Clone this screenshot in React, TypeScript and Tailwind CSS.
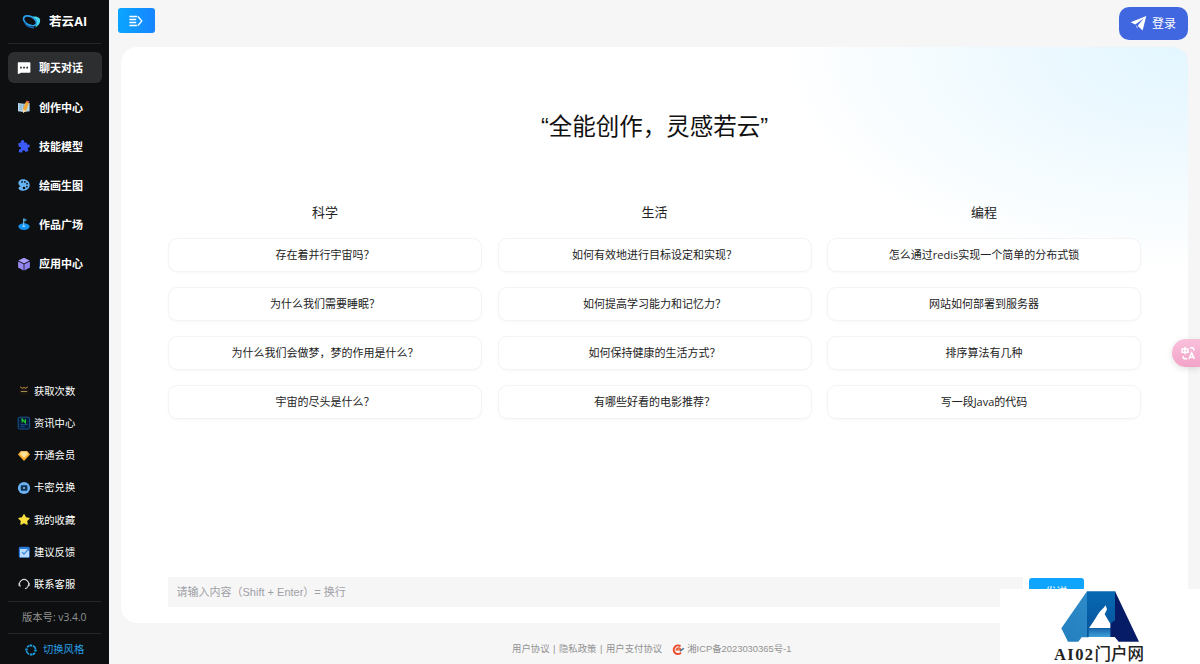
import type { ReactNode } from "react";
import { FaStar } from "react-icons/fa";
import { IoColorPalette } from "react-icons/io5";

interface MenuItem {
    label: string;
    icon: ReactNode;
}

interface TopicProps {
    title: string;
    questions: string[];
}

const navItems: MenuItem[] = [
    {
        label: "聊天对话",
        icon: (
            <svg viewBox="0 0 14 14" className="h-[14px] w-[14px]">
                <path d="M1.4 1.2h11.2q.8 0 .8.8v9q0 .8-.8.8H4L1.6 13q-.8.2-.8-.7V2q0-.8.6-.8z" fill="#fff" />
                <path d="M3.1 5.8h1.7v1.6H3.1zM6.2 5.8h1.7v1.6H6.2zM9.3 5.8H11v1.6H9.3z" fill="#2c2e30" />
            </svg>
        ),
    },
    {
        label: "创作中心",
        icon: (
            <svg viewBox="0 0 14 14" className="h-[14px] w-[14px]">
                <path d="M1 3l5.8.8L12.6 3v8.2l-5.8.9L1 11.2z" fill="#b9d7ea" />
                <path d="M2.2 5l3.3.4M2.2 7l3.3.4M2.2 9l3 .4" stroke="#6a9fc0" strokeWidth=".8" />
                <path d="M6.8 3.8v8.3" stroke="#7190a3" strokeWidth=".7" />
                <path d="M9 1.6l3 1.1-3 8-2.9 2.3-.2-3.4z" fill="#f5a833" />
                <path d="M9 1.6l.5-1.2 3 1.1-.5 1.2z" fill="#e86464" />
                <path d="M5.9 9.6L9 10.7 6.1 13z" fill="#f7dfbd" />
            </svg>
        ),
    },
    {
        label: "技能模型",
        icon: (
            <svg viewBox="0 0 14 14" className="h-[14px] w-[14px]">
                <path
                    d="M3.8 3.6C3.7 1.9 4.5 1 5.7 1.1c1.3.1 1.8 1 1.5 2.3l2.6.3.4 2c1.4-.5 2.6 0 2.6 1.3s-1.1 1.9-2.3 1.7l1 3.4-3.2 1c-.3-1.3-1-1.9-2-1.7-.9.2-1.2 1-.9 2.1l-3.7-.2.5-3.1c1.3 0 1.9-.5 1.8-1.3-.1-.9-.9-1.2-2-.9L1 4.5z"
                    fill="#3c5af5"
                />
            </svg>
        ),
    },
    { label: "绘画生图", icon: <IoColorPalette className="h-[14px] w-[14px] -scale-x-100 text-[#66b3f5]" /> },
    {
        label: "作品广场",
        icon: (
            <svg viewBox="0 0 14 14" className="h-[14px] w-[14px]">
                <ellipse cx="7" cy="9.6" rx="5.6" ry="3.4" fill="#1593f2" />
                <path d="M6.2 1.6h1v8.2h-1z" fill="#7acbf8" />
                <path d="M7 1.2l3.3 1.9L7 5.1z" fill="#3f8fb8" />
                <ellipse cx="6.8" cy="9.2" rx="1.7" ry=".8" fill="#9bdcfb" />
            </svg>
        ),
    },
    {
        label: "应用中心",
        icon: (
            <svg viewBox="0 0 14 14" className="h-[14px] w-[14px]">
                <path d="M7 .7l5.7 2.9L7 6.5 1.3 3.6z" fill="#a99cfb" />
                <path d="M1.1 4.4l5.5 2.8v6.2l-5.5-2.9z" fill="#978af4" />
                <path d="M12.9 4.4L7.4 7.2v6.2l5.5-2.9z" fill="#8f82f0" />
            </svg>
        ),
    },
];

const toolItems: MenuItem[] = [
    {
        label: "获取次数",
        icon: (
            <svg viewBox="0 0 14 14" className="h-[14px] w-[14px]" fill="none">
                <circle cx="7" cy="7" r="5.6" fill="#15130f" />
                <path d="M3.2 2.8l1.9 1.5L7 3.6l1.9.7 1.9-1.5" stroke="#c08c4c" strokeWidth="1" />
                <path d="M3.8 7.5h6.4" stroke="#a8845a" strokeWidth="1.1" />
            </svg>
        ),
    },
    {
        label: "资讯中心",
        icon: (
            <svg viewBox="0 0 14 14" className="h-[14px] w-[14px]" fill="none">
                <rect x="1.2" y="1.2" width="11.4" height="11.8" rx="1.6" fill="#051d3a" stroke="#195395" strokeWidth="1" />
                <path d="M5.2 6.6V3.2l3.2 3.4V3.2" stroke="#1fc32c" strokeWidth="1.3" />
                <path d="M3.6 8.6h7M3.6 10.6h4" stroke="#1d5494" strokeWidth=".9" />
            </svg>
        ),
    },
    {
        label: "开通会员",
        icon: (
            <svg viewBox="0 0 14 14" className="h-[14px] w-[14px]">
                <path d="M3.5 2.2h7L13 5.6 7 12 1 5.6z" fill="#f6ac2f" />
                <path d="M4.2 2.2h5.6l1.2 3.2L7 9 3 5.4z" fill="#ffdb87" />
                <path d="M5 4.5h4L7 6.6z" fill="#fff2d2" />
            </svg>
        ),
    },
    {
        label: "卡密兑换",
        icon: (
            <svg viewBox="0 0 14 14" className="h-[14px] w-[14px]">
                <circle cx="7" cy="7" r="6.1" fill="#69b1f2" />
                <rect x="3.8" y="4.3" width="6.6" height="5.4" rx=".8" fill="#14324f" />
                <circle cx="7" cy="7" r="1" fill="#80bff4" />
            </svg>
        ),
    },
    { label: "我的收藏", icon: <FaStar className="h-[11px] w-[12px] text-[#fbe03e]" /> },
    {
        label: "建议反馈",
        icon: (
            <svg viewBox="0 0 14 14" className="h-[14px] w-[14px]" fill="none">
                <rect x="1.8" y="1.8" width="11" height="11" rx="1.6" fill="#2979d6" />
                <path d="M3 4h7l2 2v6.2H3z" fill="#b9dcff" />
                <path d="M5 7.2l2 2 4.8-5.5" stroke="#3884dc" strokeWidth="1.2" />
            </svg>
        ),
    },
    {
        label: "联系客服",
        icon: (
            <svg viewBox="0 0 14 14" className="h-[14px] w-[14px]" fill="none">
                <path d="M3.4 9.6A4.5 4.5 0 1 1 10.8 9.6Q10 11.4 8 11.6" stroke="#d9d9d9" strokeWidth="1.1" />
                <path d="M2.2 6v3M12 6v3" stroke="#d9d9d9" strokeWidth="1.3" />
            </svg>
        ),
    },
];

const topics: TopicProps[] = [
    {
        title: "科学",
        questions: ["存在着并行宇宙吗？", "为什么我们需要睡眠？", "为什么我们会做梦，梦的作用是什么？", "宇宙的尽头是什么？"],
    },
    {
        title: "生活",
        questions: ["如何有效地进行目标设定和实现？", "如何提高学习能力和记忆力？", "如何保持健康的生活方式？", "有哪些好看的电影推荐？"],
    },
    {
        title: "编程",
        questions: ["怎么通过redis实现一个简单的分布式锁", "网站如何部署到服务器", "排序算法有几种", "写一段Java的代码"],
    },
];

function Sidebar() {
    return (
        <aside className="flex w-[109px] shrink-0 flex-col bg-[#0d0f10] px-2 text-white">
            <div className="flex h-[44px] items-center border-b border-[#242627] pl-[14px]">
                <svg viewBox="0 0 20 16" className="h-[16px] w-[20px]" fill="none">
                    <ellipse cx="8" cy="6.8" rx="7" ry="4.2" transform="rotate(28 8 6.8)" stroke="#2aa3ee" strokeWidth="1.7" />
                    <path d="M10.4 2.8c5.6-.9 8.6 1.7 7.6 5.2-.6 2.3-2.5 4.6-5 5.5 1.9-2.6 3-5.6 1-8-.9-1.200-2.200-2-3.600-2.700z" fill="#49d9ee" />
                    <path d="M2.500 8c1.200 3.400 5 5.600 9.500 5.800" stroke="#1769b6" strokeWidth="1.300" />
                </svg>
                <span className="ml-[7px] pt-[2px] text-[12.5px] font-bold tracking-[0.1px]">若云AI</span>
            </div>
            <nav className="mt-2 flex flex-col gap-2">
                {navItems.map((item, index) => (
                    <div
                        key={item.label}
                        className={
                            index === 0
                                ? "flex h-[31.2px] w-[94px] items-center rounded-[6px] bg-[#2c2e30] pl-[9px]"
                                : "flex h-[31.2px] w-[94px] items-center rounded-[6px] pl-[9px]"
                        }
                    >
                        <span className="flex w-[14px] justify-center">{item.icon}</span>
                        <span className="ml-[8px] pt-[2px] text-[11px] font-bold">{item.label}</span>
                    </div>
                ))}
            </nav>
            <div className="mt-auto flex flex-col">
                {toolItems.map((item) => (
                    <div key={item.label} className="flex h-[32.1px] items-center pl-[9px]">
                        <span className="flex w-[14px] justify-center">{item.icon}</span>
                        <span className="ml-[3px] pt-[1px] text-[10.3px]">{item.label}</span>
                    </div>
                ))}
            </div>
            <div className="mt-[1px] flex h-[32px] items-center border-t border-[#242627] pl-[14px] text-[10.3px] text-[#929292]">
                版本号: v3.4.0
            </div>
            <div className="flex h-[31px] items-center border-t border-[#242627] pt-[1px] pl-[16px] text-[10.3px] text-[#2a9fe5]">
                <svg viewBox="0 0 14 14" className="mr-[5px] h-[14px] w-[14px]" fill="none" stroke="#1ca2e4" strokeWidth="1.6">
                    <path d="M3.2 4.4q.7-1.2 2-1.700M9 2.800q2.200 1 2.500 3.200M11 9.700q-.8 1.200-2.200 1.700M5 11.200Q2.800 10.200 2.500 8" />
                    <path d="M5.600 1.500h2.600v1.900H5.600zM10.300 6.600h2.400v1.900h-2.400zM5.900 10.600h2.600v1.900H5.900zM1.300 5.500h2.400v1.900H1.300z" fill="#1ca2e4" stroke="none" />
                </svg>
                切换风格
            </div>
        </aside>
    );
}

function Topic({ title, questions }: TopicProps) {
    return (
        <div className="flex flex-col">
            <h3 className="text-center text-[13px] leading-[20px] text-[#222]">{title}</h3>
            <div className="mt-[16px] flex flex-col gap-[15px]">
                {questions.map((question) => (
                    <button
                        key={question}
                        className="h-[34px] rounded-[9px] border border-[#f4f4f5] bg-white text-[11px] text-[#222] shadow-[0_1px_3px_rgba(0,0,0,0.03)]"
                    >
                        {question}
                    </button>
                ))}
            </div>
        </div>
    );
}

function Watermark() {
    return (
        <div className="absolute right-0 bottom-0 flex h-[75px] w-[200px] flex-col bg-white">
            <svg viewBox="180 93 240 156" className="mt-[2px] ml-[60px] h-[52px] w-[80px] shrink-0">
                <defs>
                    <linearGradient id="mark-left" x1="0.7" y1="0" x2="0.2" y2="1">
                        <stop offset="0" stopColor="#2d8ac7" />
                        <stop offset="1" stopColor="#2480bf" />
                    </linearGradient>
                    <linearGradient id="mark-mid" x1="0" y1="0" x2="0" y2="1">
                        <stop offset="0" stopColor="#0869b3" />
                        <stop offset="1" stopColor="#03529a" />
                    </linearGradient>
                    <linearGradient id="mark-base" x1="0" y1="0" x2="0" y2="1">
                        <stop offset="0" stopColor="#1766aa" />
                        <stop offset="1" stopColor="#3da1da" />
                    </linearGradient>
                </defs>
                <path d="M261 94L184 205l20 40h31l10-13h20z" fill="url(#mark-left)" />
                <path d="M261 94h85v137h-85z" fill="url(#mark-mid)" />
                <path d="M345 94l72 151h-61l-12-14h-13v-40l14-10z" fill="#061c66" />
                <path d="M266 205h65v26h-65z" fill="url(#mark-base)" />
                <path d="M267 204c17-22 27-47 44-61l6-7 4 12-7 15 17 28v13z" fill="#fff" />
            </svg>
            <div className="ml-[54px] shrink-0 font-['Liberation_Serif','Noto_Sans_CJK_SC',serif] text-[16.5px] leading-[24px] whitespace-nowrap text-[#222]">
                <span className="font-bold tracking-[1.4px]">AI02</span>
                <span className="font-medium">门户网</span>
            </div>
        </div>
    );
}

export default function App() {
    return (
        <div
            lang="zh-CN"
            className="relative flex h-[664px] w-[1200px] overflow-hidden bg-[#f6f6f6] font-['Open_Sans','Noto_Sans_CJK_SC',sans-serif]"
        >
            <Sidebar />
            <div className="flex flex-1 flex-col pr-3 pl-[12px]">
                <header className="flex h-[47px] items-start justify-between">
                    <button className="mt-2 -ml-[3.5px] flex h-[25px] w-[37px] items-center justify-center rounded-[3px] bg-linear-to-r from-[#0ba5ff] to-[#1685ff]">
                        <svg viewBox="0 0 14 12" className="h-[12px] w-[14px]" fill="none" stroke="#fff" strokeWidth="1.3">
                            <path d="M.4 1.500h7.800M.4 4.500h6.800M.4 7.500h6.800M.4 10.500h7.800M9 1.500l3.800 4.500L9 10.500" />
                        </svg>
                    </button>
                    <button className="mt-[7px] flex h-[33px] w-[69px] items-center rounded-[10px] bg-[#4167e0] pl-[11px] text-[12px] text-white">
                        <svg viewBox="0 0 17 17" className="mr-[5px] h-[17px] w-[17px]" fill="#fff">
                            <path d="M16.300 1L.6 7.300l4.700 2.300 8.300-6-5.500 6.600-.2.800 4.700 4.600z" />
                            <path d="M5.800 10.300l1.500 1.200.2 2.500z" />
                        </svg>
                        登录
                    </button>
                </header>
                <main className="flex h-[576px] flex-col rounded-[16px] bg-white bg-[radial-gradient(ellipse_410px_225px_at_100%_0%,#e3f6ff_0%,#edf9ff_40%,#ffffff_100%)] px-[47px]">
                    <h1 className="mt-[60px] text-center font-['Liberation_Sans','Noto_Sans_CJK_SC',sans-serif] text-[23.5px] leading-[40px] text-[#111]">
                        “全能创作，灵感若云”
                    </h1>
                    <div className="mt-[55px] grid grid-cols-3 gap-[15.5px]">
                        {topics.map((topic) => (
                            <Topic key={topic.title} {...topic} />
                        ))}
                    </div>
                    <div className="mt-auto mb-4 flex gap-[6px]">
                        <input
                            className="h-[30px] w-[855px] bg-[#f6f6f6] px-[8.5px] font-['Liberation_Sans','Noto_Sans_CJK_SC',sans-serif] text-[11px] outline-none placeholder:text-[#a0a0a6]"
                            placeholder="请输入内容（Shift + Enter）= 换行"
                        />
                        <button className="mt-[1px] h-[29px] w-[55px] rounded-[3px] bg-[#10a5fc] text-[11px] text-white">发送</button>
                    </div>
                </main>
                <footer className="flex flex-1 items-center pt-3 pl-[391px] font-['Liberation_Sans','Noto_Sans_CJK_SC',sans-serif] text-[9.4px] whitespace-nowrap text-[#929292]">
                    <span>用户协议</span>
                    <span className="mx-[3.5px]">|</span>
                    <span>隐私政策</span>
                    <span className="mx-[3.5px]">|</span>
                    <span>用户支付协议</span>
                    <svg viewBox="0 0 14 12" className="mr-[2px] ml-[9px] h-[12px] w-[14px]" fill="none">
                        <path d="M9.500 2.400A4.200 4.200 0 1 0 10 8.600" stroke="#ed4b2b" strokeWidth="2" />
                        <path d="M4.400 5.800h5.500c-.2-2.200-3.800-2.400-4.500-.6" stroke="#e85a30" strokeWidth="1.300" />
                        <path d="M9 7.200l3.800-3" stroke="#3d6c93" strokeWidth="1.400" />
                    </svg>
                    <span>湘ICP备2023030365号-1</span>
                </footer>
            </div>
            <button className="absolute top-[339px] right-0 flex h-[28px] w-[28px] items-center rounded-l-full bg-linear-to-b from-[#f9c1db] to-[#f3a2c8] pl-[9px] shadow-[0_2px_6px_rgba(0,0,0,0.12)]">
                <svg viewBox="0 0 15 14" className="h-[14px] w-[15px]" fill="none" stroke="#fff" strokeWidth="1.5">
                    <path d="M1 3h6v3.200H1zM4 .8v7.500M9 1.800h2q1.800 0 1.800 2v1M2.200 10v1q0 1.800 2 1.800h2M8 13l2.700-6.200L13.400 13M9 11.200h3.500" />
                </svg>
            </button>
            <Watermark />
        </div>
    );
}
